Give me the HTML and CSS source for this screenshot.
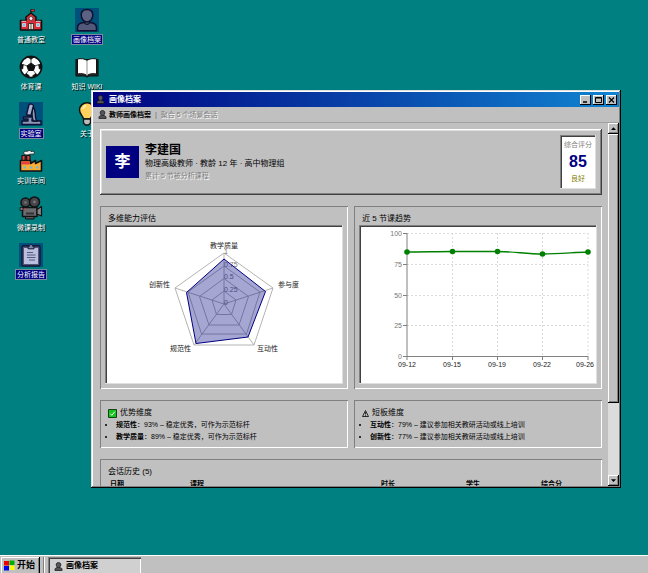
FILE: index.html
```html
<!DOCTYPE html>
<html lang="zh-CN">
<head>
<meta charset="utf-8">
<meta name="viewport" content="width=device-width, initial-scale=1">
<title>画像档案</title>
<link rel="stylesheet" href="styles.css">
</head>
<body>
<svg class="sprite" aria-hidden="true">
  <symbol id="person" viewBox="0 0 24 24">
    <path d="M2.500 22.500v-2.500c0-3 2.500-4.600 6.500-5.200v-1.300C7 12.300 5.800 9.800 5.800 7.500c0-3.800 2.500-6 6.200-6s6.200 2.200 6.200 6c0 2.300-1.200 4.800-3.200 6v1.300c4 .6 6.500 2.200 6.500 5.200v2.500z" fill="#55555c" stroke="#141414" stroke-width="2" stroke-linejoin="round"/>
    <path d="M8.500 14c2 1.500 5 1.500 7 0" fill="none" stroke="#141414" stroke-width="1.500"/>
  </symbol>
</svg>
<div class="screen">
  <main class="desktop">
    <nav class="shortcuts" aria-label="桌面">
      <a class="shortcut" href="#">
        <svg class="picture" viewBox="0 0 24 24" stroke="#111" stroke-linejoin="round">
          <path d="M12 6V1.500" stroke-width="1.200"/><path d="M12 1.500h3.500v2H12z" fill="#e33" stroke-width=".6"/>
          <path d="M1.500 22V12.500H7V9l5-4 5 4v3.500h5.500V22z" fill="#d92d3a" stroke-width="1.600"/>
          <path d="M2.500 13.300H7M17 13.300h4.500" stroke="#f2e3e3" stroke-width=".9"/>
          <circle cx="12" cy="10.500" r="1.900" fill="#fff" stroke-width=".6"/>
          <path d="M3.500 15.500h3v3h-3zM17.500 15.500h3v3h-3z" fill="#6fc3f0" stroke="#e8e8e8" stroke-width=".7"/>
          <path d="M9.500 21.500V15.500h5v6z" fill="#e8e0d0" stroke-width=".7"/><path d="M12 15.500v6" stroke-width=".6"/>
        </svg>
        <span class="label">普通教室</span>
      </a>
      <a class="shortcut" href="#">
        <svg class="picture" viewBox="0 0 24 24" stroke="#111" stroke-linejoin="round">
          <circle cx="12" cy="12" r="10.600" fill="#fff" stroke-width="1.700"/>
          <path d="M12 8l4 2.900-1.500 4.600h-5L8 10.900z" fill="#111"/>
          <path d="M12 8V4M16 10.900l4-1.400M14.500 15.500l2.500 3.500M9.500 15.500L7 19M8 10.900L4 9.500" stroke-width=".7"/>
          <path d="M8.700 2l3.300 2.300L15.300 2zM22 8.500l-2.300 1.300.6 4.200 2.200-.5zM18.500 20l-1.800-1.500-3 2.200.8 1.500zM5.500 20l1.800-1.500 3 2.200-.8 1.500zM2 8.500l2.300 1.300-.6 4.200-2.200-.5z" fill="#111" stroke-width=".7"/>
        </svg>
        <span class="label">体育课</span>
      </a>
      <a class="shortcut selected" href="#">
        <svg class="picture" viewBox="0 0 24 24" stroke="#0d1030" stroke-linejoin="round">
          <path d="M3 22.500v-3.500h6V17H4.500v-2h10.500v2H13v2h9v3.500z" fill="#8c97b8" stroke-width="1.400"/>
          <path d="M13.500 4.500c2 2 2.800 4.500 2.800 7.500 0 3 .2 5.500 1.700 7h-3.500c-1.200-2-1.500-4.500-1.500-7.500z" fill="#8c97b8" stroke-width="1.300"/>
          <path d="M10 2.500c1-1 4-.5 4.500 1L12 13.500l-4.500-.8z" fill="#a5afce" stroke-width="1.400"/>
        </svg>
        <span class="label">实验室</span>
      </a>
      <a class="shortcut" href="#">
        <svg class="picture" viewBox="0 0 24 24" stroke="#111" stroke-linejoin="round">
          <path d="M5 5C4 3 6 1.500 8 2.500c1.500-1.500 3.500-1 4 0 2-.8 4 .3 3.300 2-1.300 1.300-3.300.3-4.600.8-1.700.9-4 .9-5.700-.3z" fill="#eee" stroke-width=".8"/>
          <path d="M3 12V6.500h3.200V12M7.700 12V6.500H11V12" fill="#e7413d" stroke-width="1.200"/>
          <path d="M1.500 22V11.500H11.500v3l5-3v3l6-3V22z" fill="#fbae34" stroke-width="1.600"/>
          <path d="M2.300 12.300h8.400v3.200H2.300z" fill="#e7413d" stroke="none"/>
          <path d="M4.500 17.500H7v2H4.500zM10.800 17.500h2.500v2h-2.500zM17 17.500h2.500v2H17z" fill="#62bde5" stroke="none"/>
        </svg>
        <span class="label">实训车间</span>
      </a>
      <a class="shortcut" href="#">
        <svg class="picture" viewBox="0 0 24 24" stroke="#111" stroke-linejoin="round">
          <circle cx="6.500" cy="6.500" r="4.500" fill="#47474b" stroke-width="1.500"/><circle cx="15.500" cy="5.900" r="5" fill="#47474b" stroke-width="1.500"/>
          <circle cx="6.500" cy="6.500" r="1.200" fill="#77777c" stroke="none"/><circle cx="15.500" cy="5.900" r="1.400" fill="#77777c" stroke="none"/>
          <path d="M3.500 11.500H18v9H3.500z" fill="#6b6b70" stroke-width="1.500"/><path d="M18 13.500l4.500-3v9.500L18 18z" fill="#85858a" stroke-width="1.200"/>
          <path d="M1 11.500h3v3H1z" fill="#777" stroke-width=".8"/><path d="M7 16.500h8v2H7z" fill="#333" stroke="none"/><circle cx="5.300" cy="13.300" r=".9" fill="#d33" stroke="none"/>
          <path d="M6.500 20.500H15v2.500H6.500z" fill="#555"/>
        </svg>
        <span class="label">微课录制</span>
      </a>
      <a class="shortcut selected" href="#">
        <svg class="picture" viewBox="0 0 24 24" stroke="#141838" stroke-linejoin="round">
          <rect x="3" y="2.800" width="18" height="20.200" rx="1.500" fill="#4f5478" stroke-width="1.400"/>
          <path d="M5 5h14v16H5z" fill="#b9bfdd" stroke="none"/><path d="M9 5.800V3.200h1.500C10.700.8 13.300.8 13.500 3.200H15v2.600z" fill="#8089ab" stroke-width="1"/>
          <path d="M8 9.500h6M8 12h8.500M8 14.500h8.500M10 17h6" stroke="#525980" stroke-width="1"/>
        </svg>
        <span class="label">分析报告</span>
      </a>
      <a class="shortcut selected" href="#">
        <svg class="picture" viewBox="0 0 24 24" stroke="#10132e" stroke-linejoin="round">
          <path d="M2.500 22.800v-3c0-3.300 2.700-5 6.500-5.300h6c3.800.3 6.500 2 6.500 5.300v3z" fill="#53597a" stroke-width="1.500"/>
          <path d="M9.500 12.500h5V15c-1.300 1.700-3.700 1.700-5 0z" fill="#53597a" stroke-width="1.200"/>
          <path d="M6.200 7c0-3.500 2.200-5.500 5.800-5.500S17.800 3.500 17.800 7c0 4-2.600 7-5.800 7s-5.800-3-5.800-7z" fill="#5c6284" stroke-width="1.500"/>
        </svg>
        <span class="label">画像档案</span>
      </a>
      <a class="shortcut" href="#">
        <svg class="picture" viewBox="0 0 24 24" stroke="#111" stroke-linejoin="round">
          <path d="M1 4.500h22v16.300H14l-2 1.200-2-1.200H1z" fill="#29292d" stroke-width="1.200"/>
          <path d="M12 5.500c-2.500-2-6-2.200-9.500-1.500v15c3.500-.7 7-.5 9.500 1.500 2.500-2 6-2.200 9.500-1.500V4c-3.500-.7-7-.5-9.500 1.500z" fill="#fff" stroke-width="1"/>
          <path d="M12 5.500v15" stroke="#aaa" stroke-width="1.300"/>
        </svg>
        <span class="label">知识 WIKI</span>
      </a>
      <a class="shortcut" href="#">
        <svg class="picture" viewBox="0 0 24 24" stroke="#111" stroke-linejoin="round">
          <path d="M8.500 17c0-3-4-4.200-4-9A7.500 7.200 0 0 1 19.500 8c0 4.800-4 6-4 9z" fill="#ffd25e" stroke-width="1.500"/>
          <path d="M8 7c.3-2 1.500-3 3-3.300" fill="none" stroke="#fff3bd" stroke-width="1.500"/>
          <path d="M8.500 17h7v4l-2 2h-3l-2-2z" fill="#bbb" stroke-width="1.300"/>
        </svg>
        <span class="label">关于</span>
      </a>
    </nav>

    <section class="window" aria-label="画像档案">
      <header class="titlebar">
        <svg class="mini"><use href="#person"/></svg>
        <h1>画像档案</h1>
        <div class="controls">
          <button type="button" aria-label="最小化"><svg viewBox="0 0 9 8"><path d="M2 6h4" stroke="#000" stroke-width="1.500"/></svg></button>
          <button type="button" aria-label="最大化"><svg viewBox="0 0 9 8"><path d="M1.500 1.500h6v5h-6zM1.500 2h6" fill="none" stroke="#000"/></svg></button>
          <button type="button" aria-label="关闭"><svg viewBox="0 0 9 8"><path d="M2 1.500l5 5M7 1.500l-5 5" stroke="#000" stroke-width="1.200"/></svg></button>
        </div>
      </header>
      <div class="toolbar">
        <svg class="mini"><use href="#person"/></svg>
        <strong>教师画像档案</strong><span class="divider">|</span><span class="muted">聚合 5 个场景会话</span>
      </div>
      <div class="viewport">
        <div class="content">
          <section class="profile">
            <div class="avatar">李</div>
            <div class="identity">
              <h2>李建国</h2>
              <p>物理高级教师 · 教龄 12 年 · 高中物理组</p>
              <p class="muted">累计 5 节被分析课程</p>
            </div>
            <div class="score"><span>综合评分</span><strong>85</strong><em>良好</em></div>
          </section>

          <div class="pair">
            <section class="panel">
              <h3>多维能力评估</h3>
              <svg class="chart" viewBox="0 0 238 159" role="img" aria-label="多维能力评估">
                <g class="web">
                  <path d="M119 28l49 35-19 57H89L70 63z"/>
                  <path d="M119 41l36 26-13.500 42h-45L83 67z"/>
                  <path d="M119 53.500l24.500 18-9.500 28.500h-30L94.500 71.500z"/>
                  <path d="M119 66l12 9-4.500 14.500h-15L107 75z"/>
                  <path d="M119 79V28M119 79l49-16M119 79l30 41M119 79l-30 41M119 79L70 63"/>
                </g>
                <g class="tick"><text x="119" y="80">0</text><text x="119" y="67">0.25</text><text x="119" y="54">0.5</text><text x="119" y="42">0.75</text><text x="119" y="29">1</text></g>
                <path class="shape" d="M119 34l41.500 32.500-17.500 45.500-52 6.500L81.500 67.500z"/>
                <g class="axis-name">
                  <text x="119" y="23" text-anchor="middle">教学质量</text>
                  <text x="173" y="62">参与度</text>
                  <text x="152" y="126">互动性</text>
                  <text x="86" y="126" text-anchor="end">规范性</text>
                  <text x="65" y="62" text-anchor="end">创新性</text>
                </g>
              </svg>
            </section>
            <section class="panel">
              <h3>近 5 节课趋势</h3>
              <svg class="chart" viewBox="0 0 238 159" role="img" aria-label="近 5 节课趋势">
                <path class="grid" d="M48 8.500h181M48 39.500h181M48 70.500h181M48 100.500h181M93.500 8v123M138.500 8v123M183.500 8v123M229 8v123"/>
                <path class="axis" d="M48 8v123.500h181M44 8.500h4M44 39.500h4M44 70.500h4M44 100.500h4M44 131.500h4M48 131v4M93.500 131v4M138.500 131v4M183.500 131v4M229 131v4"/>
                <g class="value" text-anchor="end"><text x="43" y="11">100</text><text x="43" y="42">75</text><text x="43" y="73">50</text><text x="43" y="103">25</text><text x="43" y="134">0</text></g>
                <g class="date" text-anchor="middle"><text x="48" y="142">09-12</text><text x="93" y="142">09-15</text><text x="138" y="142">09-19</text><text x="183" y="142">09-22</text><text x="226" y="142">09-26</text></g>
                <path class="line" d="M48 27C63 27 78 26.500 93.500 26.500S123 26.500 138.500 26.500 168 29 183.500 29 214 27.500 229 27"/>
                <g fill="#008000"><circle cx="48" cy="27" r="2.800"/><circle cx="93.500" cy="26.500" r="2.800"/><circle cx="138.500" cy="26.500" r="2.800"/><circle cx="183.500" cy="29" r="2.800"/><circle cx="229" cy="27" r="2.800"/></g>
              </svg>
            </section>
          </div>

          <div class="pair">
            <section class="panel notes">
              <h3><svg class="badge" viewBox="0 0 9 9"><path d="M.5.500h8v8h-8z" fill="#16c51c" stroke="#173f18"/><path d="M2.200 4.700L3.800 6.300 6.900 2.600" fill="none" stroke="#fff"/></svg>优势维度</h3>
              <ul>
                <li><strong>规范性</strong>：93% – 稳定优秀，可作为示范标杆</li>
                <li><strong>教学质量</strong>：89% – 稳定优秀，可作为示范标杆</li>
              </ul>
            </section>
            <section class="panel notes">
              <h3><svg class="badge warning" viewBox="0 0 7 9"><path d="M3.500 1.500L6.500 7.500H.5z" fill="none" stroke="#000" stroke-width=".8"/><path d="M3.500 3.200v2.300M3.500 6v.8" stroke="#000" stroke-width=".8"/></svg>短板维度</h3>
              <ul>
                <li><strong>互动性</strong>：79% – 建议参加相关教研活动或线上培训</li>
                <li><strong>创新性</strong>：77% – 建议参加相关教研活动或线上培训</li>
              </ul>
            </section>
          </div>

          <section class="panel notes">
            <h3>会话历史 (5)</h3>
            <table>
              <colgroup><col class="c-date"><col class="c-course"><col class="c-time"><col class="c-students"><col></colgroup>
              <thead><tr><th scope="col">日期</th><th scope="col">课程</th><th scope="col">时长</th><th scope="col">学生</th><th scope="col">综合分</th></tr></thead>
            </table>
          </section>
        </div>
        <div class="scrollbar">
          <button type="button" aria-label="向上滚动"><svg viewBox="0 0 11 11"><path d="M3 7h5L5.500 4.200z"/></svg></button>
          <div class="track"><div class="thumb"></div></div>
          <button type="button" aria-label="向下滚动"><svg viewBox="0 0 11 11"><path d="M3 4.200h5L5.500 7z"/></svg></button>
        </div>
      </div>
    </section>
  </main>

  <footer class="taskbar">
    <button type="button" class="start">
      <svg viewBox="0 0 11 11"><path d="M0 1h5v4.500H0z" fill="#f00000"/><path d="M5.500.500H10.500V5H5.500z" fill="#00b000"/><path d="M0 6h5v4.500H0z" fill="#0000f0"/><path d="M5.500 5.500h5V10h-5z" fill="#ff0"/></svg>
      开始
    </button>
    <span class="grip"></span>
    <button type="button" class="task"><svg class="mini"><use href="#person"/></svg>画像档案</button>
  </footer>
</div>
</body>
</html>
```
FILE: styles.css
```css
* { box-sizing: border-box; }

body {
  margin: 0;
  font-family: "Liberation Sans", "Noto Sans CJK SC", sans-serif;
  font-size: 8px;
  line-height: 12px;
  color: #000;
}

h1, h2, h3, p, ul { margin: 0; padding: 0; }
button { margin: 0; padding: 0; border: 0; font: inherit; color: inherit; background: #c0c0c0; }
svg { display: block; flex: none; }

.sprite { position: absolute; width: 0; height: 0; }

.screen {
  display: flex;
  flex-direction: column;
  height: 100vh;
  overflow: hidden;
  background: #008080;
}

.desktop { position: relative; flex: 1; min-height: 0; }

/* Desktop shortcuts */
.shortcuts {
  display: grid;
  grid-auto-flow: column;
  grid-template-rows: repeat(6, 47px);
  grid-auto-columns: 56px;
  padding: 8px 3px;
}

.shortcut {
  display: flex;
  flex-direction: column;
  align-items: center;
  gap: 2px;
  color: #fff;
  text-decoration: none;
}

.picture { width: 24px; height: 24px; }

.label {
  padding: 0 1px;
  border: 1px solid transparent;
  font-size: 7px;
  line-height: 9px;
  white-space: nowrap;
  text-shadow: 1px 1px 0 #000;
}

.selected .picture { background: #00507c; }
.selected .label { background: #000080; border: 1px solid #7c8ca0; text-shadow: none; }

/* Window frame */
.window {
  position: absolute;
  left: 91px;
  top: 90px;
  display: flex;
  flex-direction: column;
  width: 530px;
  height: 398px;
  padding: 2px;
  background: #c0c0c0;
  box-shadow: inset -1px -1px #000, inset 1px 1px #dfdfdf, inset -2px -2px #808080, inset 2px 2px #fff;
}

.titlebar {
  display: flex;
  align-items: center;
  gap: 4px;
  height: 15px;
  padding: 0 2px 0 3px;
  background: linear-gradient(90deg, #000080, #1084d0);
  color: #fff;
}

.titlebar h1 { flex: 1; font-size: 8px; }
.mini { width: 9px; height: 9px; }

.controls { display: flex; gap: 2px; }
.controls button {
  width: 11px;
  height: 10px;
  padding: 1px;
  box-shadow: inset -1px -1px #000, inset 1px 1px #fff;
}
.controls svg { width: 9px; height: 8px; }

.toolbar {
  display: flex;
  align-items: center;
  gap: 2px;
  height: 16px;
  padding: 0 5px;
  border-bottom: 1px solid #a0a0a0;
  font-size: 7px;
}
.divider { padding: 0 2px; color: #606060; }
.muted { color: #808080; text-shadow: 1px 1px 0 #fff; }

.viewport { display: flex; flex: 1; min-height: 0; overflow: hidden; }
.content {
  display: flex;
  flex: 1;
  flex-direction: column;
  gap: 11px;
  min-width: 0;
  padding: 6px 6px 6px 7px;
  overflow: hidden;
}
.content > * { flex: none; }

/* Teacher summary */
.profile {
  display: flex;
  align-items: center;
  gap: 6px;
  padding: 6px;
  box-shadow: inset -1px -1px #404040, inset 1px 1px #fff, inset -2px -2px #808080, inset 2px 2px #dfdfdf;
}
.avatar {
  width: 33px;
  background: #000080;
  color: #fff;
  font-size: 16px;
  font-weight: 700;
  line-height: 32px;
  text-align: center;
}
.identity { flex: 1; }
.identity h2 { font-size: 12px; line-height: 16px; }
.identity .muted { font-size: 7px; }

.score {
  display: flex;
  flex-direction: column;
  align-items: center;
  padding: 4px;
  background: #fff;
  box-shadow: inset -1px -1px #dfdfdf, inset 1px 1px #808080, inset 2px 2px #404040;
  font-size: 7px;
}
.score span { color: #808080; }
.score strong { color: #000080; font-size: 16px; line-height: 22px; }
.score em { color: #808000; font-style: normal; line-height: 12px; }

/* Group boxes */
.pair { display: grid; grid-template-columns: 1fr 1fr; gap: 6px; }

.panel {
  padding: 7px 5px 5px;
  box-shadow: inset 1px 1px #808080, inset -1px -1px #fff;
}
.panel h3 {
  display: flex;
  align-items: center;
  gap: 3px;
  padding-left: 3px;
  font-size: 8px;
  font-weight: 400;
}

.chart {
  width: 100%;
  height: auto;
  background: #fff;
  box-shadow: inset -1px -1px #dfdfdf, inset 1px 1px #808080, inset 2px 2px #404040;
}
.web { fill: none; stroke: #b4b4b4; }
.shape { fill: #000080; fill-opacity: 0.35; stroke: #000080; }
.tick, .value { fill: #777; font-size: 7px; }
.axis-name, .date { fill: #222; font-size: 7px; }
.grid { fill: none; stroke: #dcdcdc; stroke-dasharray: 2 2; }
.axis { fill: none; stroke: #808080; }
.line { fill: none; stroke: #008000; stroke-width: 1.300px; }

.badge { width: 9px; height: 9px; }
.warning { width: 7px; }

.notes { font-size: 7px; }
.notes ul { padding-left: 11px; list-style: disc; }

table { width: 100%; table-layout: fixed; border-collapse: collapse; }
th { padding: 1px 5px; text-align: left; line-height: 10px; }
.c-date { width: 80px; }
.c-course { width: 191px; }
.c-time { width: 85px; }
.c-students { width: 75px; }

/* Scrollbar */
.scrollbar { display: flex; flex-direction: column; width: 11px; }
.scrollbar button { height: 11px; box-shadow: inset -1px -1px #000, inset 1px 1px #fff, inset -2px -2px #808080; }
.scrollbar svg { width: 11px; height: 11px; }
.track { flex: 1; background: #dcdcdc; }
.thumb {
  height: 79%;
  background: #c0c0c0;
  box-shadow: inset -1px -1px #000, inset 1px 1px #fff, inset -2px -2px #808080;
}

/* Taskbar */
.taskbar {
  display: flex;
  flex: none;
  gap: 3px;
  height: 18px;
  padding: 2px 1px 0;
  background: #c0c0c0;
  box-shadow: inset 0 1px #fff;
  font-size: 8px;
}
.taskbar button { display: flex; align-items: center; font-weight: 700; }
.start {
  gap: 2px;
  width: 39px;
  font-size: 9px;
  box-shadow: inset -1px 0 #000, inset 1px 1px #fff, inset -2px 0 #808080;
}
.taskbar .start { padding-left: 3px; }
.start svg { width: 11px; height: 11px; }
.grip { width: 2px; border-left: 1px solid #808080; border-right: 1px solid #fff; }
.task {
  gap: 3px;
  width: 93px;
  background: #d0d0d0;
  box-shadow: inset 1px 1px #808080, inset 2px 2px #404040, inset -1px 0 #fff;
}
.taskbar .task { padding: 2px 0 0 6px; }
```
